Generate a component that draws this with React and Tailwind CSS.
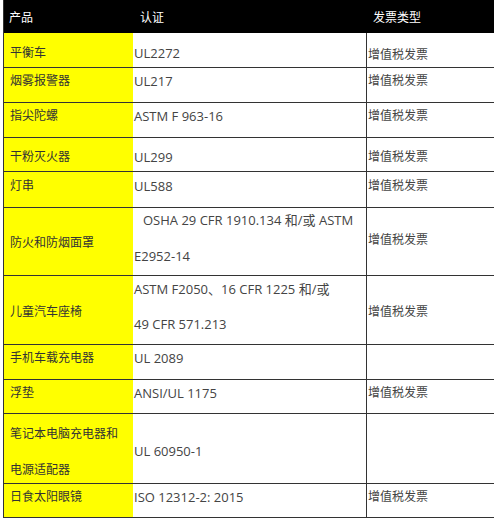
import React from "react";

const font = { fontFamily: '"Open Sans", "Noto Sans CJK SC", sans-serif' };

function Row({ h, children }) {
  return (
    <div className={`grid grid-cols-[129px_233px_1px_127px] border-b border-[#333] ${h}`}>
      {children}
    </div>
  );
}

const Sep = () => <div className="bg-[#333]" />;

export default function App() {
  const c1 = "bg-[#ffff00] pl-[6px] text-[12px] leading-[16px] text-[#333]";
  const c2 = "bg-white pl-[1px] text-[13px] leading-[16px] text-[#444]";
  const c3 = "bg-white pl-[1px] text-[12px] leading-[16px] text-[#444]";
  const inv = "增值税发票";
  return (
    <div className="w-[500px] h-[521px] bg-white pl-[3px]" style={font}>
      <div className="w-[491px] border-l border-[#333]">
        <div className="grid grid-cols-[129px_233px_1px_127px] h-[33px] bg-black text-white text-[12px] leading-[16px]">
          <div className="pl-[5px] pt-[10px]">产品</div>
          <div className="pl-[7px] pt-[10px]">认证</div>
          <div />
          <div className="pl-[6px] pt-[10px]">发票类型</div>
        </div>
        <Row h="h-[35px]">
          <div className={`${c1} pt-[12px]`}>平衡车</div>
          <div className={`${c2} pt-[12px]`}>UL2272</div>
          <Sep />
          <div className={`${c3} pt-[14px]`}>{inv}</div>
        </Row>
        <Row h="h-[35px]">
          <div className={`${c1} pt-[5px]`}>烟雾报警器</div>
          <div className={`${c2} pt-[5px]`}>UL217</div>
          <Sep />
          <div className={`${c3} pt-[5px]`}>{inv}</div>
        </Row>
        <Row h="h-[35px]">
          <div className={`${c1} pt-[5px]`}>指尖陀螺</div>
          <div className={`${c2} pt-[5px]`}>ASTM F 963-16</div>
          <Sep />
          <div className={`${c3} pt-[5px]`}>{inv}</div>
        </Row>
        <Row h="h-[34px]">
          <div className={`${c1} pt-[11px]`}>干粉灭火器</div>
          <div className={`${c2} pt-[11px]`}>UL299</div>
          <Sep />
          <div className={`${c3} pt-[11px]`}>{inv}</div>
        </Row>
        <Row h="h-[36px]">
          <div className={`${c1} pt-[6px]`}>灯串</div>
          <div className={`${c2} pt-[6px]`}>UL588</div>
          <Sep />
          <div className={`${c3} pt-[6px]`}>{inv}</div>
        </Row>
        <Row h="h-[68px]">
          <div className={`${c1} pt-[27px]`}>防火和防烟面罩</div>
          <div className={`${c2} pt-[4px] flex flex-col gap-[20px]`}>
            <div className="pl-[9px]">OSHA 29 CFR 1910.134 和/或 ASTM</div>
            <div>E2952-14</div>
          </div>
          <Sep />
          <div className={`${c3} pt-[24px]`}>{inv}</div>
        </Row>
        <Row h="h-[69px]">
          <div className={`${c1} pt-[28px]`}>儿童汽车座椅</div>
          <div className={`${c2} pt-[5px] flex flex-col gap-[19px]`}>
            <div>ASTM F2050、16 CFR 1225 和/或</div>
            <div>49 CFR 571.213</div>
          </div>
          <Sep />
          <div className={`${c3} pt-[28px]`}>{inv}</div>
        </Row>
        <Row h="h-[35px]">
          <div className={`${c1} pt-[5px]`}>手机车载充电器</div>
          <div className={`${c2} pt-[5px]`}>UL 2089</div>
          <Sep />
          <div className={`${c3}`} />
        </Row>
        <Row h="h-[34px]">
          <div className={`${c1} pt-[5px]`}>浮垫</div>
          <div className={`${c2} pt-[5px]`}>ANSI/UL 1175</div>
          <Sep />
          <div className={`${c3} pt-[5px]`}>{inv}</div>
        </Row>
        <Row h="h-[70px]">
          <div className={`${c1} pt-[12px] flex flex-col gap-[20px]`}>
            <div>笔记本电脑充电器和</div>
            <div>电源适配器</div>
          </div>
          <div className={`${c2} pt-[29px]`}>UL 60950-1</div>
          <Sep />
          <div className={`${c3}`} />
        </Row>
        <Row h="h-[34px]">
          <div className={`${c1} pt-[5px]`}>日食太阳眼镜</div>
          <div className={`${c2} pt-[5px]`}>ISO 12312-2: 2015</div>
          <Sep />
          <div className={`${c3} pt-[5px]`}>{inv}</div>
        </Row>
      </div>
    </div>
  );
}
